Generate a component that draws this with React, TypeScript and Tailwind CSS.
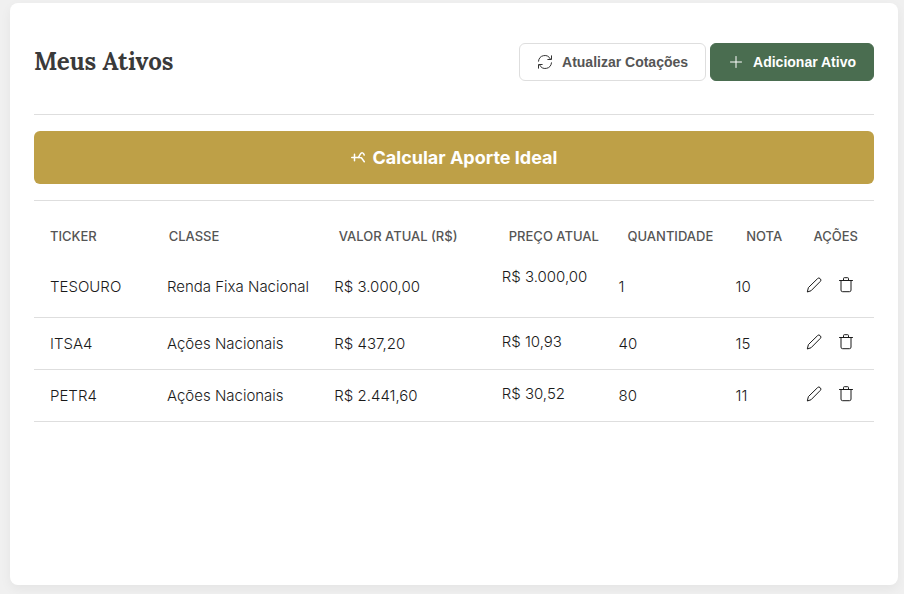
import type { ReactNode } from "react";

type Asset = {
  ticker: string;
  assetClass: string;
  value: string;
  price: string;
  quantity: number;
  score: number;
};

const assets: Asset[] = [
  { ticker: "TESOURO", assetClass: "Renda Fixa Nacional", value: "R$ 3.000,00", price: "R$ 3.000,00", quantity: 1, score: 10 },
  { ticker: "ITSA4", assetClass: "Ações Nacionais", value: "R$ 437,20", price: "R$ 10,93", quantity: 40, score: 15 },
  { ticker: "PETR4", assetClass: "Ações Nacionais", value: "R$ 2.441,60", price: "R$ 30,52", quantity: 80, score: 11 },
];

const headings = ["Ticker", "Classe", "Valor Atual (R$)", "Preço Atual", "Quantidade", "Nota", "Ações"];

const rowGrid = "grid grid-cols-[2fr_3fr_3fr_2fr_2fr_1fr_auto] gap-4 px-4";

function Icon({ children }: { children: ReactNode }) {
  return (
    <svg
      aria-hidden="true"
      className="size-4 shrink-0"
      viewBox="0 0 16 16"
      fill="none"
      stroke="currentColor"
      strokeWidth="1"
      strokeLinecap="round"
      strokeLinejoin="round"
    >
      {children}
    </svg>
  );
}

function RefreshIcon() {
  return (
    <Icon>
      <path d="M1.5 7.2A6.3 6.3 0 0 1 13.4 5M14.5 8.8A6.3 6.3 0 0 1 2.6 11" />
      <path d="M14.5 1.8v3.7h-3.7M1.5 14.2v-3.7h3.7" />
    </Icon>
  );
}

function PlusIcon() {
  return (
    <Icon>
      <path d="M8 2.5v11M2.5 8h11" />
    </Icon>
  );
}

function ContributionIcon() {
  return (
    <svg
      aria-hidden="true"
      className="size-3.5 shrink-0"
      viewBox="0 0 14 14"
      fill="none"
      stroke="currentColor"
      strokeWidth="1.5"
      strokeLinecap="round"
      strokeLinejoin="round"
    >
      <path d="M.7 6.5h7M3.5 3.2v6.6" />
      <path d="M7.5 6.4L9.3 3.2c1.2-2 3.2-1.8 3.9.8M8 6.6l2.4.1 2.9 4" />
    </svg>
  );
}

function PencilIcon() {
  return (
    <Icon>
      <path d="M1.4 14.6l1-4L11.6 1.6a1.7 1.7 0 0 1 2.5 0l.3.3a1.7 1.7 0 0 1 0 2.4L5.3 13.5z" />
    </Icon>
  );
}

function TrashIcon() {
  return (
    <Icon>
      <path d="M1.5 3.5h13M5.5 3.5v-2a.8.8 0 0 1 .8-.8h3.4a.8.8 0 0 1 .8.8v2" />
      <path d="M3 3.5v9.6a1.6 1.6 0 0 0 1.6 1.6h6.8a1.6 1.6 0 0 0 1.6-1.6v-9.6" />
    </Icon>
  );
}

export default function App() {
  return (
    <div className="min-h-screen bg-[#f0f0f0] pt-[3px] pr-[6px] pb-[9px] pl-[10px] font-['Inter',sans-serif] text-[#1a1a1a]">
      <main className="min-h-[calc(100vh-12px)] rounded-lg bg-white px-6 shadow-[0_4px_12px_rgba(0,0,0,0.05)]">
        <header className="flex items-center justify-between border-b border-[#dedede] pt-10 pb-[33px]">
          <h1 className="font-['Lora','Liberation_Serif',serif] text-2xl leading-[38px] font-bold text-[#3a3a3a]">
            Meus Ativos
          </h1>
          <div className="flex gap-1 font-['Liberation_Sans',Arial,sans-serif] text-sm font-bold">
            <button type="button" className="flex h-[38px] items-center gap-[9px] rounded-md border border-[#dedede] bg-white px-[17px] text-[#555]">
              <span className="text-[#333]">
                <RefreshIcon />
              </span>
              Atualizar Cotações
            </button>
            <button type="button" className="flex h-[38px] items-center gap-[9px] rounded-md border border-[#4a6d50] bg-[#4a6d50] px-[17px] text-white">
              <PlusIcon />
              Adicionar Ativo
            </button>
          </div>
        </header>

        <div className="border-b border-[#dedede] py-4">
          <button type="button" className="flex h-[53px] w-full items-center justify-center gap-2 rounded-md bg-[#bea047] text-lg font-bold text-white">
            <ContributionIcon />
            Calcular Aporte Ideal
          </button>
        </div>

        <table className="block w-full text-left">
          <thead className="block">
            <tr className={`${rowGrid} pt-[25px] pb-[10px]`}>
              {headings.map((heading) => (
                <th key={heading} scope="col" className="text-[13px] leading-5 font-medium whitespace-nowrap text-[#555] uppercase">
                  {heading}
                </th>
              ))}
            </tr>
          </thead>
          <tbody className="block">
            {assets.map((asset, index) => (
              <tr
                key={asset.ticker}
                className={`${rowGrid} items-center border-b border-[#dedede] text-[15px] leading-5 font-light whitespace-nowrap ${index === 0 ? "h-[62px]" : "h-[52px]"}`}
              >
                <td>{asset.ticker}</td>
                <td>{asset.assetClass}</td>
                <td>{asset.value}</td>
                <td className={index === 0 ? "pb-5" : "pb-1"}>{asset.price}</td>
                <td>{asset.quantity}</td>
                <td>{asset.score}</td>
                <td className="flex gap-2 pb-1">
                  <button type="button" aria-label={`Editar ${asset.ticker}`} className="flex size-6 items-center justify-center">
                    <PencilIcon />
                  </button>
                  <button type="button" aria-label={`Excluir ${asset.ticker}`} className="flex size-6 items-center justify-center">
                    <TrashIcon />
                  </button>
                </td>
              </tr>
            ))}
          </tbody>
        </table>
      </main>
    </div>
  );
}
